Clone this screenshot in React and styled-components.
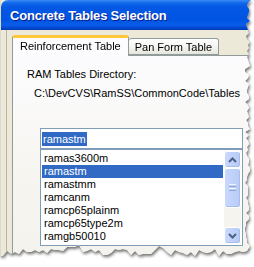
import React from "react";
import styled, { createGlobalStyle } from "styled-components";

const GlobalStyle = createGlobalStyle`
  html, body { margin: 0; padding: 0; background: #ffffff; }
  body { font-family: "Liberation Sans", Arial, sans-serif; }
`;

const W = 251;
const H = 263;

function tornPolygon() {
  let seed = 7;
  const rnd = () => {
    seed = (seed * 9301 + 49297) % 233280;
    return seed / 233280;
  };
  const pts = ["0px 0px", `${W}px 0px`];
  for (let y = 3; y < H - 14; y += 3) {
    const x = W - 1 - Math.round(rnd() * 5);
    pts.push(`${x}px ${y}px`);
  }
  for (let x = W - 4; x > 0; x -= 4) {
    const y = H - 14 + Math.round(rnd() * 7 + (x > 60 && x < 80 ? -4 : 0) + (x > 155 && x < 170 ? -3 : 0));
    pts.push(`${x}px ${y}px`);
  }
  pts.push(`0px ${H - 7}px`);
  return `polygon(${pts.join(", ")})`;
}

const TORN = tornPolygon();

const Page = styled.div`
  width: 254px;
  height: 267px;
  overflow: hidden;
`;

const Shadow = styled.div`
  width: ${W}px;
  height: ${H}px;
  filter: drop-shadow(1px 2px 1.5px rgba(0, 0, 0, 0.55));
`;

const Window = styled.div`
  width: ${W}px;
  height: ${H}px;
  clip-path: ${TORN};
  background: #ece9d8;
  display: flex;
  flex-direction: column;
  border-left: 1px solid #dcdad0;
  box-sizing: border-box;
`;

const TitleBar = styled.div`
  height: 30px;
  flex: none;
  display: flex;
  align-items: center;
  padding-left: 9px;
  box-sizing: border-box;
  border-top-left-radius: 7px;
  background: linear-gradient(
    to bottom,
    #3a8cf6 0px,
    #1268ea 3px,
    #0558e3 7px,
    #0054e3 20px,
    #0a5ee9 25px,
    #0048d0 28px,
    #003ab6 30px
  );
  color: #ffffff;
  font-weight: bold;
  font-size: 13px;
  letter-spacing: -0.2px;
  text-shadow: 1px 1px 0 #0a1e8c;
`;

const Body = styled.div`
  flex: 1;
  display: flex;
  padding-left: 5px;
`;

const Client = styled.div`
  flex: 1;
  border-left: 1px solid #b9b6a8;
  padding: 5px 0 0 5px;
  display: flex;
  flex-direction: column;
`;

const TabRow = styled.div`
  display: flex;
  align-items: flex-end;
  height: 21px;
  margin-bottom: -1px;
  position: relative;
  z-index: 1;
`;

const Tab = styled.div`
  box-sizing: border-box;
  font-size: 11px;
  color: #000;
  display: flex;
  align-items: center;
  justify-content: center;
  border: 1px solid #919b9c;
  border-top-left-radius: 3px;
  border-top-right-radius: 3px;
  ${(p) =>
    p.$active
      ? `
    height: 21px;
    padding: 0 7px 0 7px;
    background: #fcfcfe;
    border-top: 3px solid #ffc83c;
    border-bottom: none;
    padding-bottom: 2px;
  `
      : `
    height: 17px;
    margin-bottom: 1px;
    padding: 0 6px;
    border-left: none;
    background: linear-gradient(to bottom, #ffffff, #f3f3ef 60%, #e6e5dc);
  `}
`;

const Panel = styled.div`
  flex: 1;
  border: 1px solid #919b9c;
  background: linear-gradient(to bottom, #fcfcfe, #f6f5f0 60%, #f3f2ec);
  display: flex;
  flex-direction: column;
  padding: 12px 0 0 14px;
`;

const Label = styled.div`
  font-size: 11px;
  color: #000;
  line-height: 13px;
  white-space: nowrap;
`;

const PathText = styled(Label)`
  margin: 6px 0 0 7px;
`;

const Input = styled.div`
  margin: 28px 0 0 13px;
  width: 203px;
  height: 21px;
  box-sizing: border-box;
  border: 1px solid #7f9db9;
  background: #ffffff;
  display: flex;
  align-items: center;
  padding-left: 1px;
`;

const Selected = styled.span`
  background: #316ac5;
  color: #ffffff;
  font-size: 11px;
  line-height: 14px;
  padding: 0 1px;
`;

const ListBox = styled.div`
  margin-left: 13px;
  width: 203px;
  height: 97px;
  box-sizing: border-box;
  border: 1px solid #7f9db9;
  background: #ffffff;
  display: flex;
  padding: 1px 1px 1px 1px;
`;

const Items = styled.div`
  flex: 1;
  padding-top: 1px;
`;

const Item = styled.div`
  height: 13px;
  line-height: 13px;
  font-size: 11px;
  padding-left: 2px;
  margin-right: 1px;
  white-space: nowrap;
  color: ${(p) => (p.$sel ? "#ffffff" : "#000000")};
  background: ${(p) => (p.$sel ? "#316ac5" : "transparent")};
`;

const ScrollBar = styled.div`
  width: 17px;
  display: flex;
  flex-direction: column;
  background: #f5f4ef;
`;

const SBtn = styled.div`
  height: 17px;
  flex: none;
  box-sizing: border-box;
  border: 1px solid #ffffff;
  border-radius: 3px;
  background: linear-gradient(to right, #c9d9fc, #b7cbf8);
  box-shadow: inset -1px -1px 0 #a9bde8;
  display: flex;
  align-items: center;
  justify-content: center;
`;

const Thumb = styled(SBtn)`
  height: 40px;
`;

const Track = styled.div`
  flex: 1;
`;

const Chevron = ({ up }) => (
  <svg width="9" height="6" viewBox="0 0 9 6">
    <path
      d={up ? "M1 5 L4.5 1.5 L8 5" : "M1 1 L4.5 4.5 L8 1"}
      fill="none"
      stroke="#4d6185"
      strokeWidth="2"
    />
  </svg>
);

const Grip = () => (
  <svg width="8" height="8" viewBox="0 0 8 8">
    {[0, 2, 4, 6].map((y) => (
      <line key={y} x1="0" x2="7" y1={y + 0.5} y2={y + 0.5} stroke={y % 4 === 0 ? "#eef4fe" : "#8ca4d8"} strokeWidth="1" />
    ))}
  </svg>
);

const items = [
  "ramas3600m",
  "ramastm",
  "ramastmm",
  "ramcanm",
  "ramcp65plainm",
  "ramcp65type2m",
  "ramgb50010",
];

export default function App() {
  return (
    <Page>
      <GlobalStyle />
      <Shadow>
        <Window>
          <TitleBar>Concrete Tables Selection</TitleBar>
          <Body>
            <Client>
              <TabRow>
                <Tab $active>Reinforcement Table</Tab>
                <Tab>Pan Form Table</Tab>
              </TabRow>
              <Panel>
                <Label>RAM Tables Directory:</Label>
                <PathText>C:\DevCVS\RamSS\CommonCode\Tables</PathText>
                <Input>
                  <Selected>ramastm</Selected>
                </Input>
                <ListBox>
                  <Items>
                    {items.map((it) => (
                      <Item key={it} $sel={it === "ramastm"}>
                        {it}
                      </Item>
                    ))}
                  </Items>
                  <ScrollBar>
                    <SBtn>
                      <Chevron up />
                    </SBtn>
                    <Thumb>
                      <Grip />
                    </Thumb>
                    <Track />
                    <SBtn>
                      <Chevron />
                    </SBtn>
                  </ScrollBar>
                </ListBox>
              </Panel>
            </Client>
          </Body>
        </Window>
      </Shadow>
    </Page>
  );
}
